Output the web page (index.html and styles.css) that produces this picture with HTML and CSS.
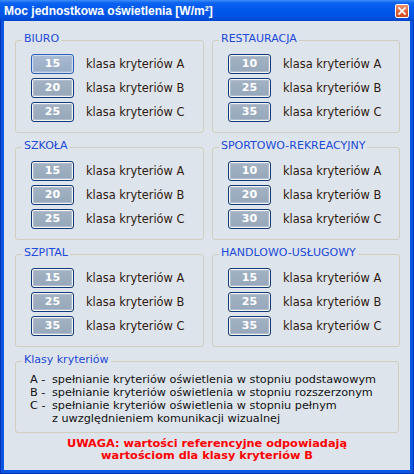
FILE: index.html
```html
<!DOCTYPE html>
<html lang="pl">
<head>
<meta charset="utf-8">
<title>Moc jednostkowa oświetlenia</title>
<link rel="stylesheet" href="styles.css">
</head>
<body>
<div class="window">
  <div class="titlebar">
    <span class="title">Moc jednostkowa oświetlenia [W/m²]</span>
    <button class="close" aria-label="Zamknij">
      <svg width="9" height="9" viewBox="0 0 9 9"><path d="M1.2 1.2 L7.8 7.8 M7.8 1.2 L1.2 7.8" stroke="#fff" stroke-width="2" stroke-linecap="square"/></svg>
    </button>
  </div>
  <div class="client">
    <div class="groups">
      <fieldset class="group">
        <legend>BIURO</legend>
        <div class="rows">
          <div class="row"><button class="val focus">15</button><span class="lbl">klasa kryteriów A</span></div>
          <div class="row"><button class="val">20</button><span class="lbl">klasa kryteriów B</span></div>
          <div class="row"><button class="val">25</button><span class="lbl">klasa kryteriów C</span></div>
        </div>
      </fieldset>
      <fieldset class="group">
        <legend>RESTAURACJA</legend>
        <div class="rows">
          <div class="row"><button class="val">10</button><span class="lbl">klasa kryteriów A</span></div>
          <div class="row"><button class="val">25</button><span class="lbl">klasa kryteriów B</span></div>
          <div class="row"><button class="val">35</button><span class="lbl">klasa kryteriów C</span></div>
        </div>
      </fieldset>
      <fieldset class="group">
        <legend>SZKOŁA</legend>
        <div class="rows">
          <div class="row"><button class="val">15</button><span class="lbl">klasa kryteriów A</span></div>
          <div class="row"><button class="val">20</button><span class="lbl">klasa kryteriów B</span></div>
          <div class="row"><button class="val">25</button><span class="lbl">klasa kryteriów C</span></div>
        </div>
      </fieldset>
      <fieldset class="group">
        <legend>SPORTOWO-REKREACYJNY</legend>
        <div class="rows">
          <div class="row"><button class="val">10</button><span class="lbl">klasa kryteriów A</span></div>
          <div class="row"><button class="val">20</button><span class="lbl">klasa kryteriów B</span></div>
          <div class="row"><button class="val">30</button><span class="lbl">klasa kryteriów C</span></div>
        </div>
      </fieldset>
      <fieldset class="group">
        <legend>SZPITAL</legend>
        <div class="rows">
          <div class="row"><button class="val">15</button><span class="lbl">klasa kryteriów A</span></div>
          <div class="row"><button class="val">25</button><span class="lbl">klasa kryteriów B</span></div>
          <div class="row"><button class="val">35</button><span class="lbl">klasa kryteriów C</span></div>
        </div>
      </fieldset>
      <fieldset class="group">
        <legend>HANDLOWO-USŁUGOWY</legend>
        <div class="rows">
          <div class="row"><button class="val">15</button><span class="lbl">klasa kryteriów A</span></div>
          <div class="row"><button class="val">25</button><span class="lbl">klasa kryteriów B</span></div>
          <div class="row"><button class="val">35</button><span class="lbl">klasa kryteriów C</span></div>
        </div>
      </fieldset>
    </div>
    <fieldset class="group info">
      <legend>Klasy kryteriów</legend>
      <div class="lines">
        <span class="key">A -</span><span>spełnianie kryteriów oświetlenia w stopniu podstawowym</span>
        <span class="key">B -</span><span>spełnianie kryteriów oświetlenia w stopniu rozszerzonym</span>
        <span class="key">C -</span><span>spełnianie kryteriów oświetlenia w stopniu pełnym</span>
        <span class="key"></span><span>z uwzględnieniem komunikacji wizualnej</span>
      </div>
    </fieldset>
    <p class="warn">UWAGA: wartości referencyjne odpowiadają<br>wartościom dla klasy kryteriów B</p>
  </div>
</div>
</body>
</html>
```
FILE: styles.css
```css
html, body {
  margin: 0;
  padding: 0;
  background: #ffffff;
}

body {
  font-family: "DejaVu Sans", Verdana, sans-serif;
  font-size: 11px;
}

.window {
  width: 414px;
  height: 474px;
  box-sizing: border-box;
  display: flex;
  flex-direction: column;
  background: #0a55e4;
  box-shadow: inset 1px 0 #0433b8, inset -1px 0 #0433b8, inset 0 -1px #0433b8;
}

.titlebar {
  flex: none;
  height: 21px;
  display: flex;
  align-items: center;
  justify-content: space-between;
  padding: 0 5px 0 4px;
  background: linear-gradient(to bottom, #3d8ef8 0px, #0c62f0 3px, #0058ec 10px, #0052e2 17px, #0045cc 21px);
}

.title {
  font: bold 12px/19px "Liberation Sans", Arial, sans-serif;
  color: #ffffff;
  padding-top: 2px;
  white-space: nowrap;
}

.close {
  width: 14px;
  height: 14px;
  padding: 0;
  margin: 0;
  display: flex;
  align-items: center;
  justify-content: center;
  border: 1px solid #ffffff;
  border-radius: 2px;
  background: linear-gradient(to bottom, #ee9270, #e0643a 50%, #d04a18);
  box-sizing: border-box;
}

.close svg {
  display: block;
  width: 8px;
  height: 8px;
}

.client {
  flex: 1;
  margin: 0 4px 4px;
  background: #dee4ec;
  padding: 12px 11px 0;
}

.groups {
  display: grid;
  grid-template-columns: 189px 188px;
  column-gap: 8px;
  row-gap: 7px;
}

.group {
  margin: 0;
  min-width: 0;
  border: 1px solid #cfcebf;
  border-radius: 3px;
  padding: 6px 0 10px 6px;
}

.group legend {
  font-size: 11px;
  line-height: 11px;
  padding: 0 2px 4px;
  margin: 0;
  color: #2149d8;
  white-space: nowrap;
}

.rows {
  display: flex;
  flex-direction: column;
  gap: 4px;
  padding-left: 9px;
}

.row {
  display: flex;
  align-items: center;
  gap: 12px;
  height: 20px;
}

.val {
  width: 43px;
  height: 20px;
  margin: 0;
  padding: 0;
  box-sizing: border-box;
  border: 1px solid #123a78;
  border-radius: 3px;
  background: linear-gradient(to bottom, #a3b3c4, #95a7ba);
  box-shadow: inset 0 0 0 1px #f2f4f4, inset 0 0 0 2px #b0bccb;
  color: #ffffff;
  font: bold 11px/16px "DejaVu Sans", Verdana, sans-serif;
  text-align: center;
}

.val.focus {
  border-color: #2d5eb0;
  background: linear-gradient(to bottom, #a8bbd2, #97abc3);
  box-shadow: inset 0 0 0 1px #cfdcf0, inset 0 0 0 2px #a6bbd8;
}

.lbl {
  color: #2e1a10;
  font-size: 11.4px;
  line-height: 13px;
  white-space: nowrap;
}

.info {
  margin-top: 7px;
  padding: 4px 0 7px 6px;
}

.lines {
  display: grid;
  grid-template-columns: 22px 1fr;
  font-size: 11.25px;
  line-height: 13px;
  padding-left: 8px;
  color: #111111;
  white-space: nowrap;
}

.warn {
  margin: 5px 0 0;
  font: bold 11.3px/12px "DejaVu Sans", Verdana, sans-serif;
  color: #ff0000;
  text-align: center;
}
```
